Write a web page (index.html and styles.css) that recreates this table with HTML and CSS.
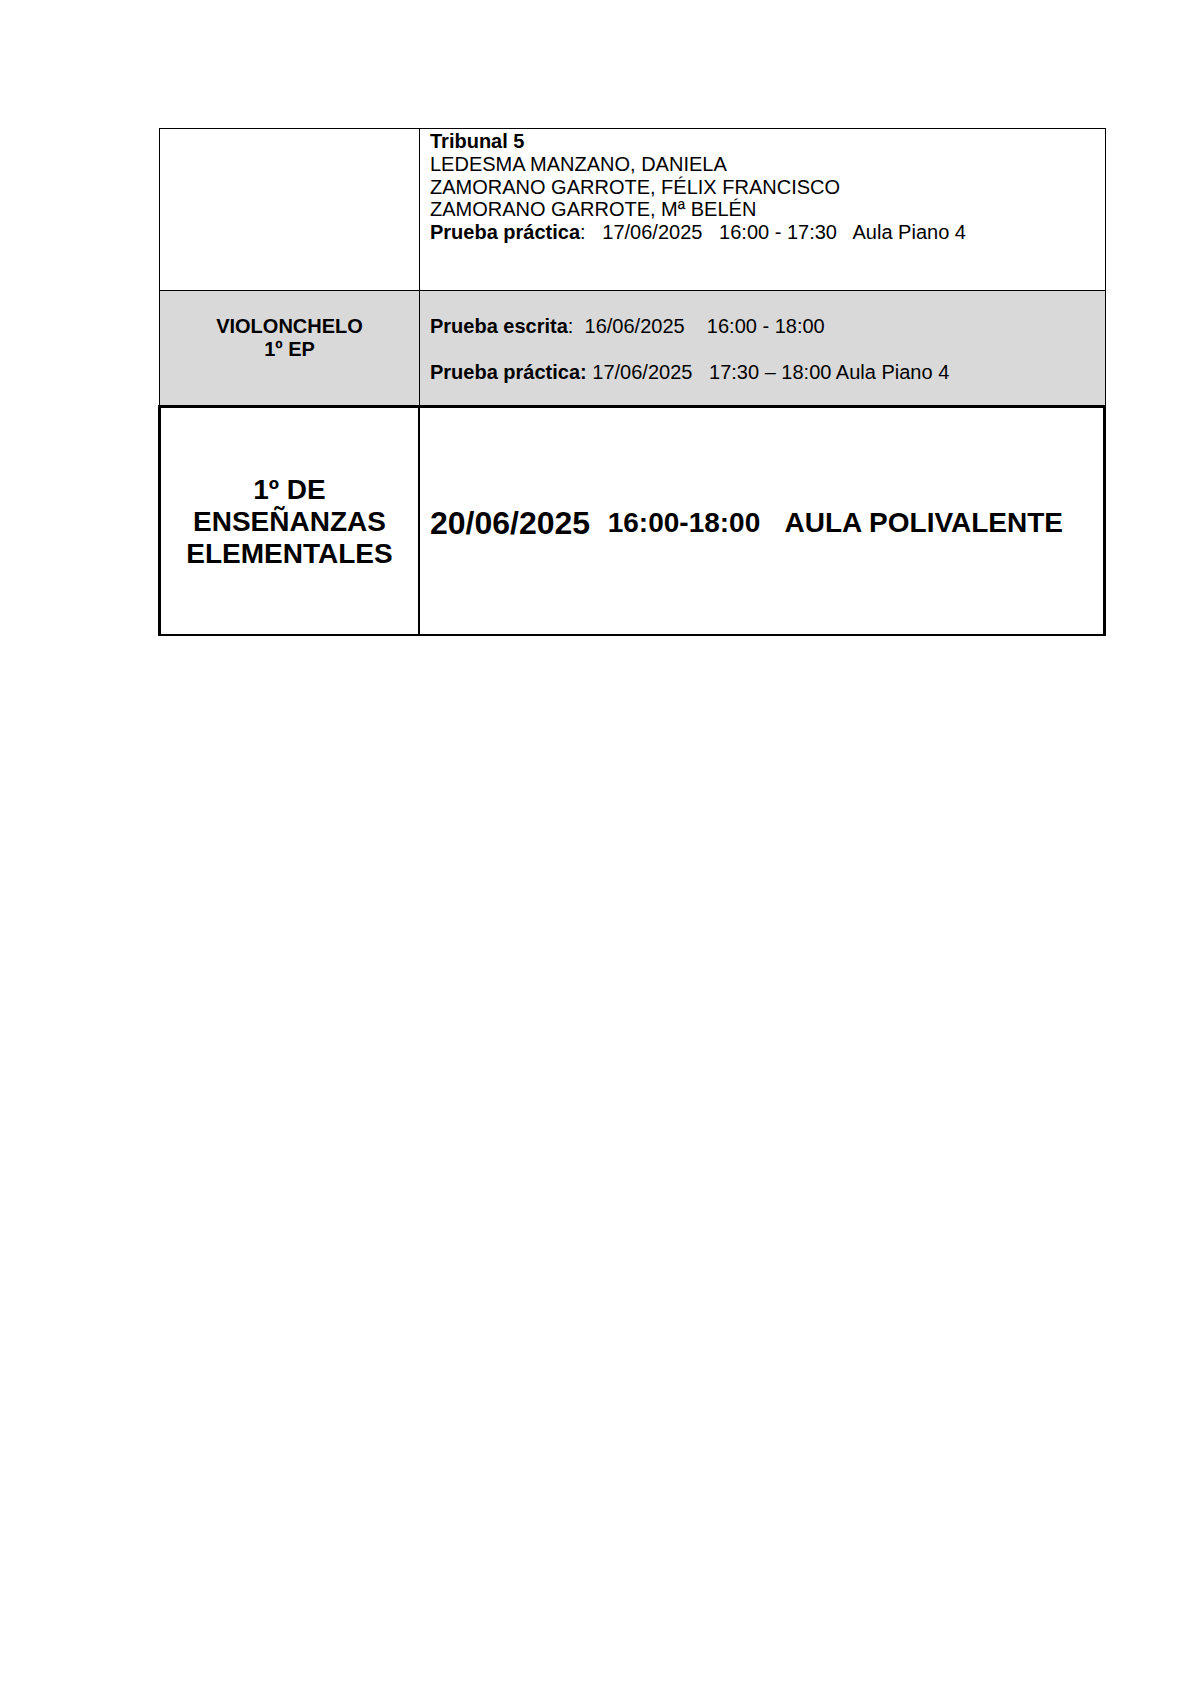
FILE: index.html
```html
<!DOCTYPE html>
<html lang="es">
<head>
<meta charset="utf-8">
<title>Calendario de pruebas</title>
<link rel="stylesheet" href="styles.css">
</head>
<body>
<div class="sheet">
  <div class="row row1">
    <div class="cell cell-left"></div>
    <div class="cell cell-right">
      <div class="line"><b>Tribunal 5</b></div>
      <div class="line">LEDESMA MANZANO, DANIELA</div>
      <div class="line">ZAMORANO GARROTE, FÉLIX FRANCISCO</div>
      <div class="line">ZAMORANO GARROTE, Mª BELÉN</div>
      <div class="line"><b>Prueba práctica</b>:   17/06/2025   16:00 - 17:30   Aula Piano 4</div>
    </div>
  </div>
  <div class="row row2">
    <div class="cell cell-left subject">
      <div class="line">VIOLONCHELO</div>
      <div class="line">1º EP</div>
    </div>
    <div class="cell cell-right">
      <div class="line"><b>Prueba escrita</b>:  16/06/2025    16:00 - 18:00</div>
      <div class="line gap"><b>Prueba práctica:</b> 17/06/2025   17:30 – 18:00 Aula Piano 4</div>
    </div>
  </div>
  <div class="row row3">
    <div class="cell cell-left course">
      <div>1º DE</div>
      <div>ENSEÑANZAS</div>
      <div>ELEMENTALES</div>
    </div>
    <div class="cell cell-right exam">
      <span class="date">20/06/2025</span><span class="slot">  16:00-18:00</span><span class="room">   AULA POLIVALENTE</span>
    </div>
  </div>
</div>
</body>
</html>
```

FILE: styles.css
```css
* {
  box-sizing: border-box;
}

html, body {
  margin: 0;
  padding: 0;
  background: #ffffff;
}

body {
  font-family: "Liberation Sans", Arial, sans-serif;
  font-size: 20px;
  color: #000000;
}

.sheet {
  padding: 128px 0 0 159px;
  width: 1190px;
}

.row {
  display: grid;
  width: 947px;
}

.row1 {
  grid-template-columns: 260px 1fr;
  height: 162px;
  border: 1px solid #000;
  border-bottom: 0;
}

.row2 {
  grid-template-columns: 260px 1fr;
  height: 115px;
  border: 1px solid #000;
  border-bottom: 0;
  background: #d9d9d9;
}

.row1 .cell-left,
.row2 .cell-left {
  border-right: 1px solid #000;
}

.line {
  line-height: 22.8px;
  white-space: pre;
}

.row1 .cell-right {
  padding: 1px 0 0 10px;
}

.row2 .cell-right {
  padding: 24px 0 0 10px;
}

.row2 .gap {
  margin-top: 22.8px;
}

.subject {
  padding-top: 24px;
  text-align: center;
  font-weight: bold;
}

.row3 {
  grid-template-columns: 259px 1fr;
  width: 948px;
  margin-left: -1px;
  height: 231px;
  border: 3px solid #000;
  border-bottom-width: 2px;
}

.row3 .cell-left {
  border-right: 2px solid #000;
}

.course {
  display: flex;
  flex-direction: column;
  justify-content: center;
  align-items: center;
  padding-top: 2px;
  text-align: center;
  font-weight: bold;
  font-size: 28px;
  line-height: 32.2px;
}

.exam {
  display: flex;
  align-items: center;
  padding: 4px 0 0 10px;
  font-weight: bold;
  white-space: pre;
}

.exam .date {
  font-size: 32px;
}

.exam .slot {
  font-size: 28px;
  padding-left: 2px;
}

.exam .room {
  font-size: 28px;
  padding-left: 2px;
}
```
